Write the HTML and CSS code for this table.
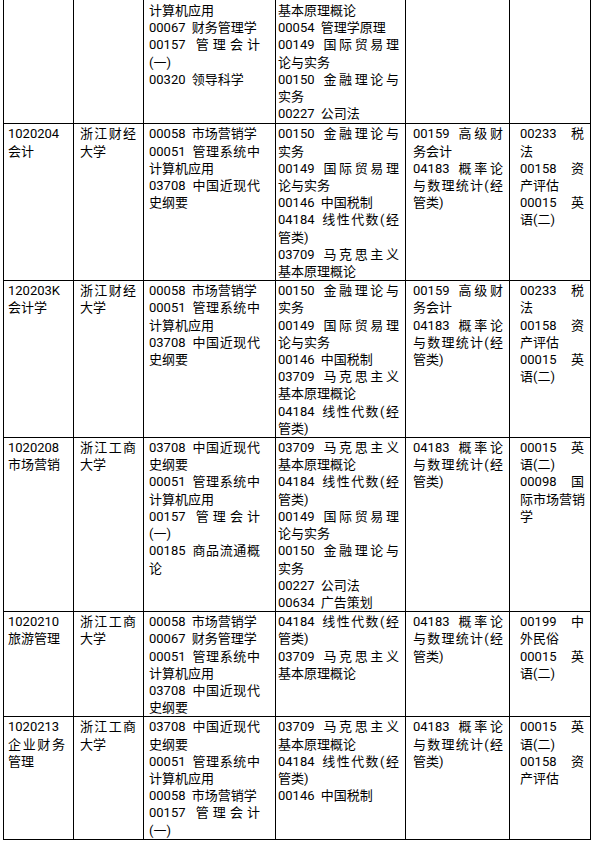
FILE: index.html
```html
<!DOCTYPE html>
<html lang="zh-CN">
<head>
<meta charset="utf-8">
<title>专业课程表</title>
<link rel="stylesheet" href="styles.css">
</head>
<body>
<div class="sheet">
  <!-- row 0 (continued from previous page) -->
  <div class="cell c1 lead"></div>
  <div class="cell c2 lead"></div>
  <div class="cell c3 lead">
    <p class="ln">计算机应用</p>
    <p class="ln">00067 财务管理学</p>
    <p class="ln j">00157 管理会计</p>
    <p class="ln">(一)</p>
    <p class="ln">00320 领导科学</p>
  </div>
  <div class="cell c4 lead">
    <p class="ln">基本原理概论</p>
    <p class="ln">00054 管理学原理</p>
    <p class="ln j">00149 国际贸易理</p>
    <p class="ln">论与实务</p>
    <p class="ln j">00150 金融理论与</p>
    <p class="ln">实务</p>
    <p class="ln">00227 公司法</p>
  </div>
  <div class="cell c5 lead"></div>
  <div class="cell c6 lead"></div>

  <!-- 1020204 -->
  <div class="cell c1">
    <p class="ln">1020204</p>
    <p class="ln">会计</p>
  </div>
  <div class="cell c2">
    <p class="ln j">浙江财经</p>
    <p class="ln">大学</p>
  </div>
  <div class="cell c3">
    <p class="ln">00058 市场营销学</p>
    <p class="ln j">00051 管理系统中</p>
    <p class="ln">计算机应用</p>
    <p class="ln j">03708 中国近现代</p>
    <p class="ln">史纲要</p>
  </div>
  <div class="cell c4">
    <p class="ln j">00150 金融理论与</p>
    <p class="ln">实务</p>
    <p class="ln j">00149 国际贸易理</p>
    <p class="ln">论与实务</p>
    <p class="ln">00146 中国税制</p>
    <p class="ln j">04184 线性代数(经</p>
    <p class="ln">管类)</p>
    <p class="ln j">03709 马克思主义</p>
    <p class="ln">基本原理概论</p>
  </div>
  <div class="cell c5">
    <p class="ln j">00159 高级财</p>
    <p class="ln">务会计</p>
    <p class="ln j">04183 概率论</p>
    <p class="ln j">与数理统计(经</p>
    <p class="ln">管类)</p>
  </div>
  <div class="cell c6">
    <p class="ln j">00233 税</p>
    <p class="ln">法</p>
    <p class="ln j">00158 资</p>
    <p class="ln">产评估</p>
    <p class="ln j">00015 英</p>
    <p class="ln">语(二)</p>
  </div>

  <!-- 120203K -->
  <div class="cell c1">
    <p class="ln">120203K</p>
    <p class="ln">会计学</p>
  </div>
  <div class="cell c2">
    <p class="ln j">浙江财经</p>
    <p class="ln">大学</p>
  </div>
  <div class="cell c3">
    <p class="ln">00058 市场营销学</p>
    <p class="ln j">00051 管理系统中</p>
    <p class="ln">计算机应用</p>
    <p class="ln j">03708 中国近现代</p>
    <p class="ln">史纲要</p>
  </div>
  <div class="cell c4">
    <p class="ln j">00150 金融理论与</p>
    <p class="ln">实务</p>
    <p class="ln j">00149 国际贸易理</p>
    <p class="ln">论与实务</p>
    <p class="ln">00146 中国税制</p>
    <p class="ln j">03709 马克思主义</p>
    <p class="ln">基本原理概论</p>
    <p class="ln j">04184 线性代数(经</p>
    <p class="ln">管类)</p>
  </div>
  <div class="cell c5">
    <p class="ln j">00159 高级财</p>
    <p class="ln">务会计</p>
    <p class="ln j">04183 概率论</p>
    <p class="ln j">与数理统计(经</p>
    <p class="ln">管类)</p>
  </div>
  <div class="cell c6">
    <p class="ln j">00233 税</p>
    <p class="ln">法</p>
    <p class="ln j">00158 资</p>
    <p class="ln">产评估</p>
    <p class="ln j">00015 英</p>
    <p class="ln">语(二)</p>
  </div>

  <!-- 1020208 -->
  <div class="cell c1">
    <p class="ln">1020208</p>
    <p class="ln">市场营销</p>
  </div>
  <div class="cell c2">
    <p class="ln j">浙江工商</p>
    <p class="ln">大学</p>
  </div>
  <div class="cell c3">
    <p class="ln j">03708 中国近现代</p>
    <p class="ln">史纲要</p>
    <p class="ln j">00051 管理系统中</p>
    <p class="ln">计算机应用</p>
    <p class="ln j">00157 管理会计</p>
    <p class="ln">(一)</p>
    <p class="ln j">00185 商品流通概</p>
    <p class="ln">论</p>
  </div>
  <div class="cell c4">
    <p class="ln j">03709 马克思主义</p>
    <p class="ln">基本原理概论</p>
    <p class="ln j">04184 线性代数(经</p>
    <p class="ln">管类)</p>
    <p class="ln j">00149 国际贸易理</p>
    <p class="ln">论与实务</p>
    <p class="ln j">00150 金融理论与</p>
    <p class="ln">实务</p>
    <p class="ln">00227 公司法</p>
    <p class="ln">00634 广告策划</p>
  </div>
  <div class="cell c5">
    <p class="ln j">04183 概率论</p>
    <p class="ln j">与数理统计(经</p>
    <p class="ln">管类)</p>
  </div>
  <div class="cell c6">
    <p class="ln j">00015 英</p>
    <p class="ln">语(二)</p>
    <p class="ln j">00098 国</p>
    <p class="ln j">际市场营销</p>
    <p class="ln">学</p>
  </div>

  <!-- 1020210 -->
  <div class="cell c1">
    <p class="ln">1020210</p>
    <p class="ln">旅游管理</p>
  </div>
  <div class="cell c2">
    <p class="ln j">浙江工商</p>
    <p class="ln">大学</p>
  </div>
  <div class="cell c3">
    <p class="ln">00058 市场营销学</p>
    <p class="ln">00067 财务管理学</p>
    <p class="ln j">00051 管理系统中</p>
    <p class="ln">计算机应用</p>
    <p class="ln j">03708 中国近现代</p>
    <p class="ln">史纲要</p>
  </div>
  <div class="cell c4">
    <p class="ln j">04184 线性代数(经</p>
    <p class="ln">管类)</p>
    <p class="ln j">03709 马克思主义</p>
    <p class="ln">基本原理概论</p>
  </div>
  <div class="cell c5">
    <p class="ln j">04183 概率论</p>
    <p class="ln j">与数理统计(经</p>
    <p class="ln">管类)</p>
  </div>
  <div class="cell c6">
    <p class="ln j">00199 中</p>
    <p class="ln">外民俗</p>
    <p class="ln j">00015 英</p>
    <p class="ln">语(二)</p>
  </div>

  <!-- 1020213 -->
  <div class="cell c1">
    <p class="ln">1020213</p>
    <p class="ln j">企业财务</p>
    <p class="ln">管理</p>
  </div>
  <div class="cell c2">
    <p class="ln j">浙江工商</p>
    <p class="ln">大学</p>
  </div>
  <div class="cell c3">
    <p class="ln j">03708 中国近现代</p>
    <p class="ln">史纲要</p>
    <p class="ln j">00051 管理系统中</p>
    <p class="ln">计算机应用</p>
    <p class="ln">00058 市场营销学</p>
    <p class="ln j">00157 管理会计</p>
    <p class="ln">(一)</p>
  </div>
  <div class="cell c4">
    <p class="ln j">03709 马克思主义</p>
    <p class="ln">基本原理概论</p>
    <p class="ln j">04184 线性代数(经</p>
    <p class="ln">管类)</p>
    <p class="ln">00146 中国税制</p>
  </div>
  <div class="cell c5">
    <p class="ln j">04183 概率论</p>
    <p class="ln j">与数理统计(经</p>
    <p class="ln">管类)</p>
  </div>
  <div class="cell c6">
    <p class="ln j">00015 英</p>
    <p class="ln">语(二)</p>
    <p class="ln j">00158 资</p>
    <p class="ln">产评估</p>
  </div>
</div>
</body>
</html>
```

FILE: styles.css
```css
html, body {
  margin: 0;
  padding: 0;
  background: #ffffff;
}

.sheet {
  display: grid;
  grid-template-columns: 70px 70px 132px 130px 104px 81px;
  width: 587px;
  margin-left: 3px;
  border-left: 1px solid #000;
  font-family: Roboto, "Noto Sans CJK SC", sans-serif;
  font-size: 13px;
  line-height: 17.2px;
  color: #000;
}

.cell {
  border-right: 1px solid #000;
  border-bottom: 1px solid #000;
  padding-top: 1px;
  padding-bottom: 0;
  min-width: 0;
}

.cell.lead {
  padding-top: 2px;
  padding-bottom: 1px;
}

.c1 { padding-left: 4px; padding-right: 8px; }
.c2 { padding-left: 6px; padding-right: 7px; }
.c3 { padding-left: 5px; padding-right: 15px; }
.c4 { padding-left: 2px; padding-right: 6px; }
.c5 { padding-left: 7px; padding-right: 6px; }
.c6 { padding-left: 10px; padding-right: 6px; }

.ln {
  margin: 0;
  white-space: nowrap;
  word-spacing: 3px;
}

.j {
  text-align: justify;
  text-align-last: justify;
}
```
